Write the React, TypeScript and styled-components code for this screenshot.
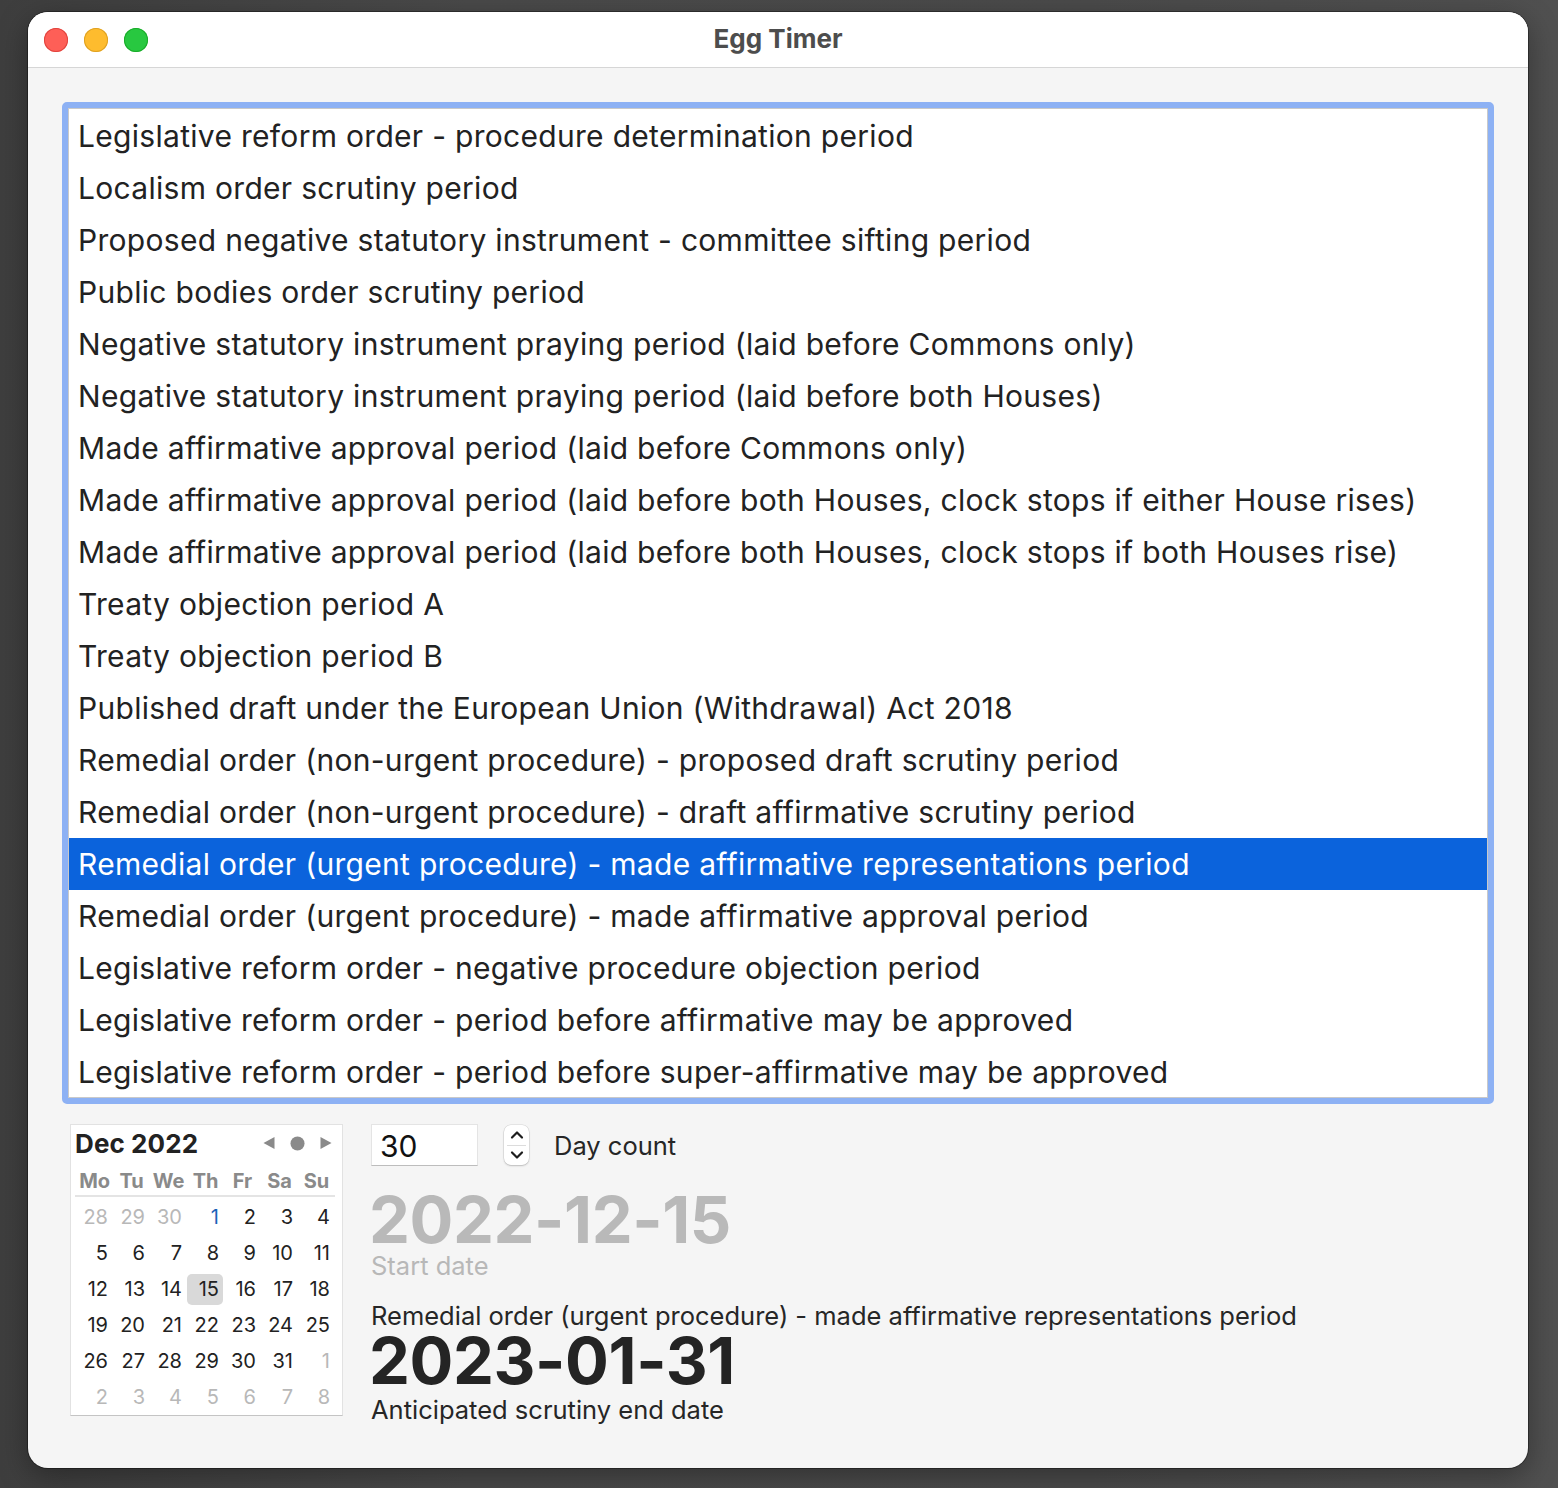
import styled, { createGlobalStyle } from 'styled-components';

const GlobalStyle = createGlobalStyle`
  html, body {
    margin: 0;
    padding: 0;
    background: #474747;
  }
  body {
    font-family: Inter, "Noto Sans", "Liberation Sans", sans-serif;
    -webkit-font-smoothing: antialiased;
  }
`;

const PERIODS = [
  'Legislative reform order - procedure determination period',
  'Localism order scrutiny period',
  'Proposed negative statutory instrument - committee sifting period',
  'Public bodies order scrutiny period',
  'Negative statutory instrument praying period (laid before Commons only)',
  'Negative statutory instrument praying period (laid before both Houses)',
  'Made affirmative approval period (laid before Commons only)',
  'Made affirmative approval period (laid before both Houses, clock stops if either House rises)',
  'Made affirmative approval period (laid before both Houses, clock stops if both Houses rise)',
  'Treaty objection period A',
  'Treaty objection period B',
  'Published draft under the European Union (Withdrawal) Act 2018',
  'Remedial order (non-urgent procedure) - proposed draft scrutiny period',
  'Remedial order (non-urgent procedure) - draft affirmative scrutiny period',
  'Remedial order (urgent procedure) - made affirmative representations period',
  'Remedial order (urgent procedure) - made affirmative approval period',
  'Legislative reform order - negative procedure objection period',
  'Legislative reform order - period before affirmative may be approved',
  'Legislative reform order - period before super-affirmative may be approved',
];

const SELECTED = 14;

type Day = { n: number; muted?: boolean; accent?: boolean; today?: boolean };

const WEEKS: Day[][] = [
  [{ n: 28, muted: true }, { n: 29, muted: true }, { n: 30, muted: true }, { n: 1, accent: true }, { n: 2 }, { n: 3 }, { n: 4 }],
  [5, 6, 7, 8, 9, 10, 11].map((n) => ({ n })),
  [12, 13, 14, 15, 16, 17, 18].map((n) => ({ n, today: n === 15 })),
  [19, 20, 21, 22, 23, 24, 25].map((n) => ({ n })),
  [...[26, 27, 28, 29, 30, 31].map((n) => ({ n })), { n: 1, muted: true }],
  [2, 3, 4, 5, 6, 7, 8].map((n) => ({ n, muted: true })),
];

const WEEKDAYS = ['Mo', 'Tu', 'We', 'Th', 'Fr', 'Sa', 'Su'];

const App = () => {
  return (
    <>
      <GlobalStyle />
      <Desktop>
        <Window>
          <TitleBar>
            <Lights>
              <Light color="#fe5f57" edge="#e0443e" />
              <Light color="#febc2e" edge="#dea123" />
              <Light color="#28c840" edge="#1aab29" />
            </Lights>
            <Title>{'Egg Timer'}</Title>
          </TitleBar>
          <Content>
            <FocusRing>
              <List>
                {PERIODS.map((label, i) => (
                  <Row key={label} selected={i === SELECTED}>{label}</Row>
                ))}
              </List>
            </FocusRing>
            <Bottom>
              <Calendar>
                <CalHeader>
                  <Month>{'Dec 2022'}</Month>
                  <NavButtons>
                    <svg width="12" height="14" viewBox="0 0 12 14"><path d="M11.5 1 L0.5 7 L11.5 13 Z" fill="#8a8a8a" /></svg>
                    <svg width="15" height="15" viewBox="0 0 16 16"><circle cx="8" cy="8" r="7.5" fill="#8a8a8a" /></svg>
                    <svg width="12" height="14" viewBox="0 0 12 14"><path d="M0.5 1 L11.5 7 L0.5 13 Z" fill="#8a8a8a" /></svg>
                  </NavButtons>
                </CalHeader>
                <WeekdayRow>
                  {WEEKDAYS.map((d) => <Weekday key={d}>{d}</Weekday>)}
                </WeekdayRow>
                <DayGrid>
                  {WEEKS.flat().map((d, i) => (
                    <DayCell key={i} muted={d.muted} accent={d.accent} today={d.today}>
                      <span>{d.n}</span>
                    </DayCell>
                  ))}
                </DayGrid>
              </Calendar>
              <Details>
                <CountRow>
                  <CountField>{'30'}</CountField>
                  <Stepper>
                    <StepHalf>
                      <svg width="14" height="10" viewBox="0 0 14 10"><path d="M2 7.5 L7 2.5 L12 7.5" fill="none" stroke="#1e1e1e" strokeWidth="2.2" strokeLinecap="round" strokeLinejoin="round" /></svg>
                    </StepHalf>
                    <StepDivider />
                    <StepHalf>
                      <svg width="14" height="10" viewBox="0 0 14 10"><path d="M2 2.5 L7 7.5 L12 2.5" fill="none" stroke="#1e1e1e" strokeWidth="2.2" strokeLinecap="round" strokeLinejoin="round" /></svg>
                    </StepHalf>
                  </Stepper>
                  <Label>{'Day count'}</Label>
                </CountRow>
                <DateBlock>
                  <BigDate muted>{'2022-12-15'}</BigDate>
                  <Label muted>{'Start date'}</Label>
                </DateBlock>
                <DateBlock>
                  <Label>{PERIODS[SELECTED]}</Label>
                  <BigDate>{'2023-01-31'}</BigDate>
                  <Label lowered>{'Anticipated scrutiny end date'}</Label>
                </DateBlock>
              </Details>
            </Bottom>
          </Content>
        </Window>
      </Desktop>
    </>
  );
};

export default App;


const Desktop = styled.div`
  width: 1558px;
  height: 1488px;
  box-sizing: border-box;
  padding: 12px 30px 20px 28px;
  background: linear-gradient(90deg, #3e3e3e 0%, #4a4a4a 30%, #4b4b4b 70%, #505050 100%);
`;

const Window = styled.div`
  width: 1500px;
  height: 1456px;
  display: flex;
  flex-direction: column;
  background: #f5f5f5;
  border-radius: 20px;
  overflow: hidden;
  box-shadow: 0 0 0 1px rgba(0, 0, 0, 0.35), 0 8px 30px rgba(0, 0, 0, 0.35);
`;

const TitleBar = styled.div`
  height: 56px;
  flex: none;
  display: flex;
  align-items: center;
  justify-content: center;
  position: relative;
  background: #ffffff;
  border-bottom: 1px solid #d6d6d6;
  box-sizing: border-box;
`;

const Lights = styled.div`
  position: absolute;
  left: 16px;
  top: 16px;
  display: flex;
  gap: 16px;
`;

const Light = styled.span<{ color: string; edge: string }>`
  width: 24px;
  height: 24px;
  border-radius: 50%;
  background: ${(p) => p.color};
  box-shadow: inset 0 0 0 1px ${(p) => p.edge};
`;

const Title = styled.div`
  font-size: 26px;
  font-weight: 700;
  color: #4d4d4d;
  margin-top: -2px;
`;

const Content = styled.div`
  flex: 1;
  display: flex;
  flex-direction: column;
  padding: 34px 34px 0;
`;

const FocusRing = styled.div`
  border: 6px solid #8db1f4;
  border-radius: 5px;
`;

const List = styled.div`
  background: #ffffff;
  border: 1px solid #c9c9c9;
  padding: 1px 0 0;
  height: 987px;
  overflow: hidden;
`;

const Row = styled.div<{ selected?: boolean }>`
  height: 52px;
  line-height: 52px;
  padding-left: 9px;
  font-size: 30px;
  letter-spacing: 0.3px;
  color: ${(p) => (p.selected ? '#ffffff' : '#222222')};
  background: ${(p) => (p.selected ? '#0b63dc' : 'transparent')};
  white-space: nowrap;
`;

const Bottom = styled.div`
  display: flex;
  align-items: flex-start;
  gap: 28px;
  padding: 20px 0 0 8px;
`;

const Calendar = styled.div`
  width: 273px;
  height: 292px;
  box-sizing: border-box;
  background: #ffffff;
  border: 1px solid #e2e2e2;
  border-bottom-color: #c4c4c4;
  padding: 3px 4px 0 4px;
  display: flex;
  flex-direction: column;
`;

const CalHeader = styled.div`
  display: flex;
  align-items: center;
  justify-content: space-between;
  height: 30px;
`;

const Month = styled.div`
  font-size: 26px;
  font-weight: 700;
  color: #222222;
  letter-spacing: 0.1px;
`;

const NavButtons = styled.div`
  display: flex;
  align-items: center;
  gap: 15px;
  padding-right: 6px;
`;

const WeekdayRow = styled.div`
  display: grid;
  grid-template-columns: repeat(7, 37px);
  height: 41px;
  align-items: center;
  margin-right: 3px;
  border-bottom: 2px solid #e4e4e4;
  box-sizing: border-box;
  padding-top: 8px;
  padding-left: 1px;
`;

const Weekday = styled.div`
  text-align: center;
  font-size: 20px;
  font-weight: 700;
  color: #8a8a8a;
  letter-spacing: -0.1px;
`;

const DayGrid = styled.div`
  display: grid;
  grid-template-columns: repeat(7, 37px);
  grid-auto-rows: 36px;
  padding-top: 2px;
`;

const DayCell = styled.div<{ muted?: boolean; accent?: boolean; today?: boolean }>`
  display: flex;
  align-items: center;
  justify-content: flex-end;
  font-size: 20px;
  color: ${(p) => (p.muted ? '#b8b8b8' : p.accent ? '#1b63b8' : '#222222')};

  span {
    min-width: 28px;
    height: 31px;
    line-height: 31px;
    text-align: right;
    padding: 0 4px;
    border-radius: 5px;
    background: ${(p) => (p.today ? '#d9d9d9' : 'transparent')};
  }
`;

const Details = styled.div`
  display: flex;
  flex-direction: column;
`;

const CountRow = styled.div`
  display: flex;
  align-items: center;
  height: 42px;
  margin-bottom: 24px;
`;

const CountField = styled.div`
  width: 107px;
  height: 42px;
  box-sizing: border-box;
  background: #ffffff;
  border: 1px solid #e4e4e4;
  border-bottom-color: #bdbdbd;
  padding-left: 8px;
  font-size: 30px;
  line-height: 42px;
  color: #111111;
`;

const Stepper = styled.div`
  margin-left: 26px;
  width: 25px;
  height: 40px;
  display: flex;
  flex-direction: column;
  align-items: center;
  background: #ffffff;
  border-radius: 7px;
  box-shadow: 0 0 0 0.5px rgba(0, 0, 0, 0.12), 0 1px 2px rgba(0, 0, 0, 0.18);
`;

const StepHalf = styled.div`
  flex: 1;
  display: flex;
  align-items: center;
  justify-content: center;
`;

const StepDivider = styled.div`
  width: 19px;
  height: 1px;
  background: #dcdcdc;
`;

const Label = styled.div<{ muted?: boolean; lowered?: boolean }>`
  font-size: 25.5px;
  line-height: 31px;
  color: ${(p) => (p.muted ? '#b8b8b8' : '#262626')};
  white-space: nowrap;
  margin-top: ${(p) => (p.lowered ? '3px' : '0')};

  ${CountRow} & {
    margin-left: 25px;
  }
`;

const DateBlock = styled.div`
  display: flex;
  flex-direction: column;
  margin-bottom: 19px;
`;

const BigDate = styled.div<{ muted?: boolean }>`
  font-size: 65px;
  font-weight: 700;
  line-height: 60px;
  letter-spacing: -0.4px;
  color: ${(p) => (p.muted ? '#b9b9b9' : '#242424')};
  margin-left: -2px;
`;
